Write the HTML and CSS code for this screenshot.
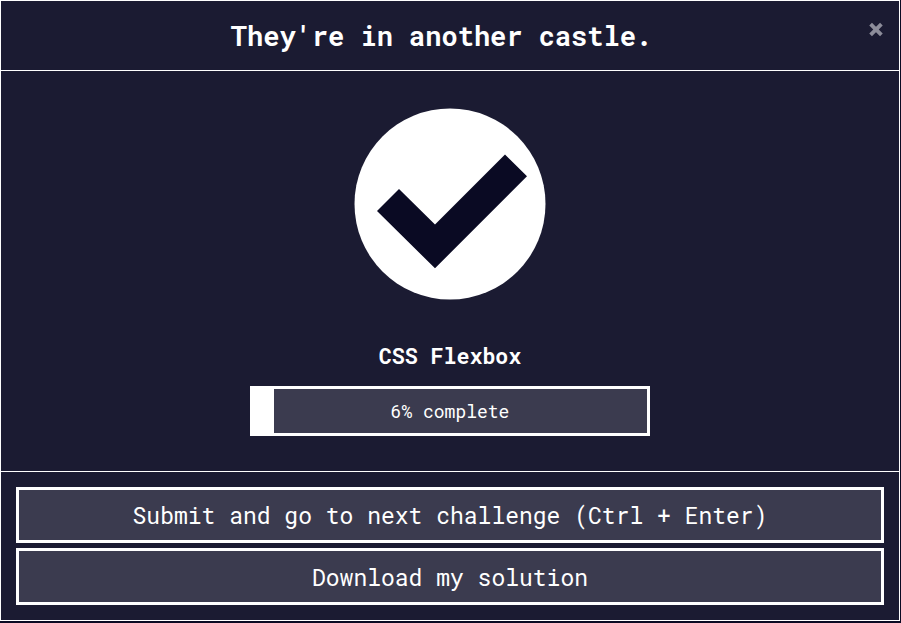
FILE: index.html
```html
<!DOCTYPE html>
<html lang="en">
<head>
<meta charset="utf-8">
<title>CSS Flexbox</title>
<link rel="stylesheet" href="styles.css">
</head>
<body>
<main class="modal">
  <header class="header">
    <h1 class="title">They're in another castle.</h1>
    <button class="close" aria-label="Close"><svg class="close-icon" viewBox="0 0 14 14" aria-hidden="true"><path d="M1.6 2.1 12.4 12.9M12.4 2.1 1.6 12.9"/></svg></button>
  </header>
  <section class="body">
    <svg class="check" viewBox="0 0 192 192" aria-hidden="true">
      <circle cx="96" cy="96" r="95.5" fill="#fff"/>
      <path d="M23 103 45 81 81 116.5 151 46.5 173 68.2 81 160.3Z" fill="#0a0a23"/>
    </svg>
    <h2 class="block-name">CSS Flexbox</h2>
    <div class="progress">
      <div class="progress-bar"></div>
      <span class="progress-label">6% complete</span>
    </div>
  </section>
  <footer class="footer">
    <button class="action">Submit and go to next challenge (Ctrl + Enter)</button>
    <button class="action action-secondary">Download my solution</button>
  </footer>
</main>
</body>
</html>
```
FILE: styles.css
```css
* { box-sizing: border-box; }
body { margin: 0; background: #0a0a23; }
.modal {
  width: 900px;
  height: 621px;
  background: #1b1b32;
  border: 1px solid #fff;
  color: #fff;
  font-family: "Roboto Mono", "DejaVu Sans Mono", monospace;
}
.header { display: flex; height: 70px; padding-right: 16px; border-bottom: 1px solid #fff; }
.title { flex: 1; margin: 0; padding-left: 13px; text-align: center; font-size: 27px; line-height: 70px; }
.close { width: 14px; height: 14px; margin-top: 21px; padding: 0; border: 0; background: none; }
.close-icon { display: block; width: 14px; height: 14px; overflow: visible; fill: none; stroke: #8d8d9a; stroke-width: 3.8; }
.body { display: flex; flex-direction: column; align-items: center; height: 401px; padding-top: 37px; border-bottom: 1px solid #fff; }
.check { width: 192px; height: 192px; }
.block-name { margin: 40px 0 0; font-size: 21.6px; line-height: 32px; }
.progress { position: relative; width: 400px; height: 50px; margin-top: 14px; border: 3px solid #fff; background: #3b3b4f; text-align: center; }
.progress-bar { position: absolute; top: 0; left: 0; width: 21px; height: 100%; background: #fff; }
.progress-label { font-size: 18px; line-height: 44px; }
.footer { display: flex; flex-direction: column; gap: 5px; padding: 15px; }
.action { height: 56px; padding: 0; border: 3px solid #fff; background: #3b3b4f; color: #fff; font: 23px/50px "Roboto Mono", "DejaVu Sans Mono", monospace; }
.action-secondary { height: 57px; padding-top: 1px; }
```
